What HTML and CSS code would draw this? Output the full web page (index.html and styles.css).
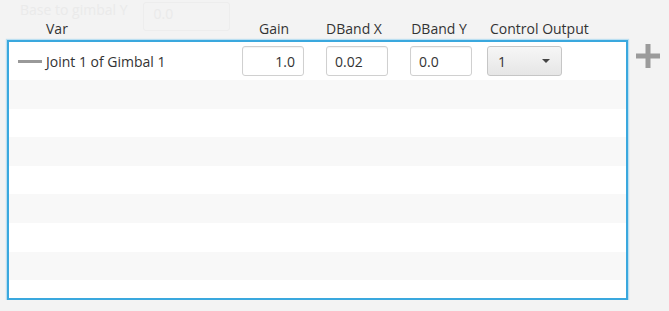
FILE: index.html
```html
<!DOCTYPE html>
<html lang="en">
<head>
  <meta charset="UTF-8" />
  <title>Joint Control Table</title>
  <link rel="stylesheet" href="styles.css">
</head>
<body>
  <!-- faded form behind the dialog -->
  <div class="ghost">
    <span class="ghost-label">Base to gimbal Y</span>
    <span class="ghost-field">0.0</span>
  </div>

  <div class="panel">
    <div class="head">
      <span class="col-var">Var</span>
      <span class="col-mid">Gain</span>
      <span class="col-mid">DBand X</span>
      <span class="col-mid">DBand Y</span>
      <span class="col-out">Control Output</span>
    </div>

    <div class="body">
      <div class="table">
        <div class="row first">
          <div class="var">
            <span class="dash"></span>
            <span>Joint 1 of Gimbal 1</span>
          </div>
          <div class="cell"><input class="field right" value="1.0"></div>
          <div class="cell"><input class="field" value="0.02"></div>
          <div class="cell"><input class="field" value="0.0"></div>
          <div class="cell-out">
            <div class="combo">
              <span>1</span>
              <span class="arrow"></span>
            </div>
          </div>
        </div>
        <div class="row"></div>
        <div class="row"></div>
        <div class="row"></div>
        <div class="row"></div>
        <div class="row"></div>
        <div class="row"></div>
        <div class="row"></div>
        <div class="row"></div>
      </div>

      <button class="add" title="Add">
        <svg width="24" height="24" viewBox="0 0 24 24">
          <rect x="9.5" y="0" width="5" height="24" fill="#9b9b9b"/>
          <rect x="0" y="9.5" width="24" height="5" fill="#9b9b9b"/>
        </svg>
      </button>
    </div>
  </div>
</body>
</html>
```

FILE: styles.css
```css
body {
  margin: 0;
  background-color: #f3f3f3;
  font-family: "Open Sans", "Noto Sans", Arial, sans-serif;
  font-size: 14px;
  color: #333;
  overflow: hidden;
}

.ghost {
  position: absolute;
  left: 0;
  top: 0;
  width: 313px;
  display: flex;
  align-items: flex-start;
  gap: 16px;
  padding: 2px 0 0 20px;
  color: #eaeaea;
  font-size: 14px;
  line-height: 14px;
}

.ghost-label {
  margin-top: 1px;
}

.ghost-field {
  box-sizing: border-box;
  width: 87px;
  height: 29px;
  line-height: 22px;
  padding-left: 9px;
  border: 1px solid #ededed;
  border-radius: 3px;
}

.panel {
  position: relative;
  padding-left: 7px;
}

.head {
  display: grid;
  grid-template-columns: 228px 74px 86px 84px 1fr;
  height: 40px;
  align-items: end;
  padding-left: 2px;
  white-space: nowrap;
}

.head span {
  line-height: 14px;
  padding-bottom: 4px;
}

.col-var {
  padding-left: 37px;
}

.col-mid {
  text-align: center;
}

.col-out {
  padding-left: 9px;
}

.body {
  display: flex;
  align-items: flex-start;
}

.table {
  width: 617px;
  height: 256px;
  border: 2px solid #3aa8de;
  box-shadow: 0 0 1px 1px rgba(120, 200, 240, 0.45);
  background-color: #fff;
  overflow: hidden;
}

.row {
  height: 28.6px;
}

.row:nth-child(even) {
  background-color: #f8f8f8;
}

.row.first {
  height: 38px;
  display: grid;
  grid-template-columns: 222px 84px 84px 84px 1fr;
  align-items: center;
}

.var {
  display: flex;
  align-items: center;
  gap: 4px;
  padding-left: 9px;
}

.dash {
  width: 24px;
  height: 3px;
  background-color: #999;
}

.cell {
  display: flex;
  justify-content: center;
}

.field {
  box-sizing: border-box;
  width: 62px;
  height: 30px;
  border: 1px solid #d0d0d0;
  border-radius: 3px;
  padding: 0 8px;
  font: inherit;
  color: #333;
  background-color: #fff;
  box-shadow: inset 0 1px 1px rgba(0, 0, 0, 0.05);
}

.field.right {
  text-align: right;
}

.cell-out {
  padding-left: 4px;
}

.combo {
  box-sizing: border-box;
  width: 75px;
  height: 30px;
  display: flex;
  align-items: center;
  justify-content: space-between;
  padding: 0 11px 0 10px;
  border: 1px solid #c6c6c6;
  border-radius: 3px;
  background: linear-gradient(#f6f6f6, #e6e6e6);
}

.arrow {
  width: 0;
  height: 0;
  border-left: 4px solid transparent;
  border-right: 4px solid transparent;
  border-top: 4px solid #444;
}

.add {
  margin: 4px 0 0 8px;
  padding: 0;
  border: none;
  background: none;
  width: 24px;
  height: 24px;
  cursor: pointer;
}

.add svg {
  display: block;
}
```
